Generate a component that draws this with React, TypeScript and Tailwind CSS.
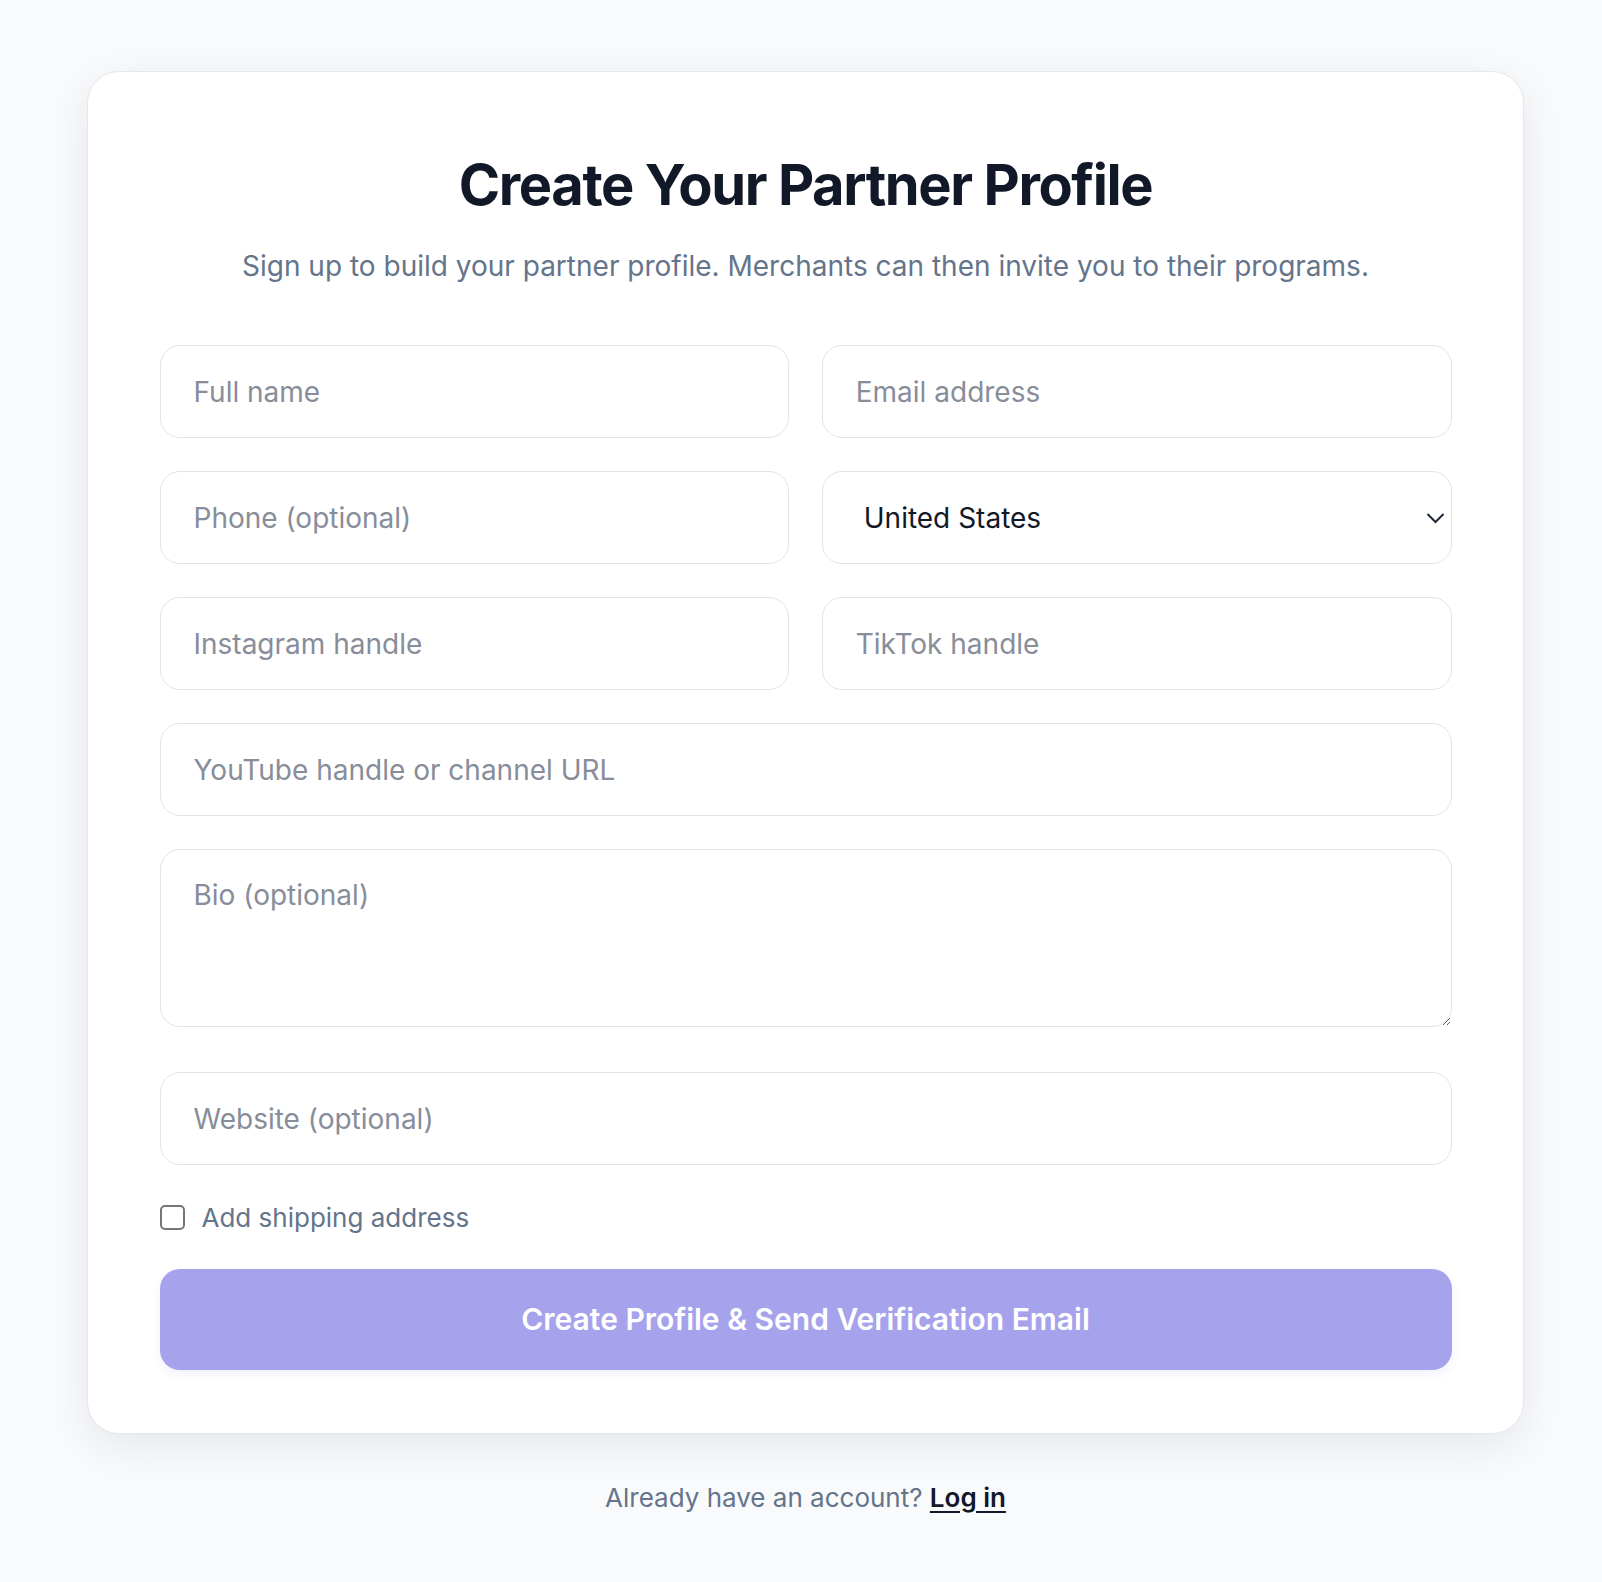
import React from "react";

const inputCls =
  "block w-full h-[93px] rounded-[20px] border-[1.5px] border-[#dfe4ec] bg-white px-[33px] text-[28px] text-[#111827] placeholder:text-[#878d99] outline-none";

export default function App() {
  return (
    <div
      className="min-h-screen bg-[#f8fafc] pt-[71px] pb-[40px] pl-[87px] pr-[78px]"
      style={{ fontFamily: "Inter, 'Noto Sans', sans-serif" }}
    >
      <div className="w-full rounded-[32px] border-[1.5px] border-[#e5e7eb] bg-white px-[71.5px] pt-[80px] pb-[62.5px] shadow-[0_12px_44px_rgba(15,23,42,0.08)]">
        <h1 className="text-center text-[56px] font-bold leading-[1.2] tracking-[-0.025em] text-[#111827]">
          Create Your Partner Profile
        </h1>
        <p className="mt-[26px] text-center text-[28px] leading-[42px] text-[#64748b]">
          Sign up to build your partner profile. Merchants can then invite you to their programs.
        </p>

        <form className="mt-[58px] flex flex-col gap-[33px]" onSubmit={(e) => e.preventDefault()}>
          <div className="grid grid-cols-2 gap-x-[32.5px] gap-y-[33px]">
            <input className={inputCls} placeholder="Full name" />
            <input className={inputCls} placeholder="Email address" />
            <input className={inputCls} placeholder="Phone (optional)" />
            <div className="relative">
              <select
                className="block w-full h-[93px] appearance-none rounded-[20px] border-[1.5px] border-[#dfe4ec] bg-white pl-[41px] pr-[60px] text-[28px] text-[#111827] outline-none"
                defaultValue="US"
              >
                <option value="US">United States</option>
                <option value="CA">Canada</option>
                <option value="GB">United Kingdom</option>
              </select>
              <svg
                className="pointer-events-none absolute right-[7px] top-1/2 -translate-y-1/2"
                width="19"
                height="12"
                viewBox="0 0 19 12"
                fill="none"
              >
                <path d="M1.5 2l8 8 8-8" stroke="#1f2937" strokeWidth="2" />
              </svg>
            </div>
            <input className={inputCls} placeholder="Instagram handle" />
            <input className={inputCls} placeholder="TikTok handle" />
          </div>
          <input className={inputCls} placeholder="YouTube handle or channel URL" />
          <textarea
            className="mb-[12px] block h-[178px] w-full rounded-[20px] border-[1.5px] border-[#dfe4ec] bg-white px-[33px] py-[24px] text-[28px] leading-[42px] text-[#111827] placeholder:text-[#878d99] outline-none"
            placeholder="Bio (optional)"
          />
          <input className={inputCls} placeholder="Website (optional)" />
          <label className="flex h-[39px] items-center gap-[17px] text-[26px] leading-[39px] text-[#64748b]">
            <span className="block h-[25px] w-[25px] rounded-[5px] border-[2px] border-[#767676] bg-white" />
            Add shipping address
          </label>
          <button
            type="submit"
            className="-mt-[1px] h-[101px] w-full rounded-[20px] bg-[#a6a2ec] text-[30px] font-semibold text-white shadow-[0_4px_10px_rgba(79,70,229,0.08)]"
          >
            Create Profile &amp; Send Verification Email
          </button>
        </form>
      </div>

      <p className="mt-[44px] text-center text-[26px] leading-[39px] text-[#64748b]">
        Already have an account?{" "}
        <a href="#" className="font-semibold text-[#111827] underline underline-offset-[4px]">
          Log in
        </a>
      </p>
    </div>
  );
}
